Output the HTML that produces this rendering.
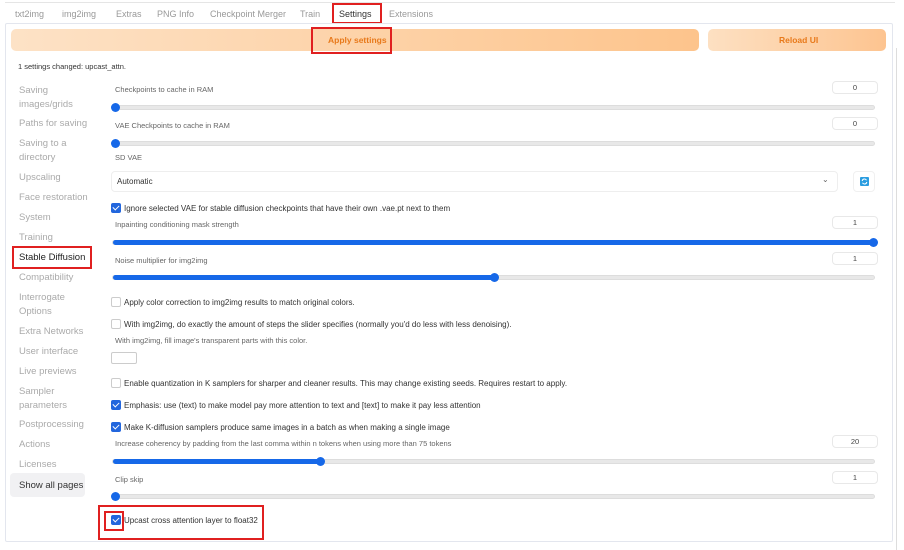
<!DOCTYPE html>
<html><head><meta charset="utf-8"><style>
*{box-sizing:border-box;margin:0;padding:0}
body{width:904px;height:550px;background:#fff;font-family:"Liberation Sans",sans-serif;position:relative;overflow:hidden;color:#444}
.a{position:absolute;white-space:nowrap}
.tab{font-size:9px;color:#999;top:9px}
.side{font-size:9.5px;color:#aaa;left:19px;line-height:14px}
.lbl{font-size:7.5px;color:#666;left:115px}
.cb{font-size:8px;color:#333;left:124px}
.num{position:absolute;left:832px;width:46px;height:13px;border:1px solid #e8e8e8;border-radius:4px;font-size:7.5px;text-align:center;line-height:11px;color:#444}
.track{position:absolute;left:112px;width:763px;height:5px;background:#e8e8e8;border-radius:3px;border:1px solid #ddd}
.fill{position:absolute;left:0;top:-1px;height:5px;background:#1668e8;border-radius:3px}
.thumb{position:absolute;width:9px;height:9px;border-radius:50%;background:#1668e8;top:-3px}
.box{position:absolute;left:111px;width:10px;height:10px;border-radius:2px}
.on{background:#2266dd}
.on:after{content:"";position:absolute;left:3px;top:1px;width:3px;height:5px;border:solid #fff;border-width:0 1.5px 1.5px 0;transform:rotate(45deg)}
.off{border:1px solid #ccc;background:#fff}
.red{position:absolute;border:2px solid #e02020}
</style></head><body>
<div class="a" style="left:5px;top:2px;width:890px;height:1px;background:#e5e5e5"></div>
<div class="a tab" style="left:15px">txt2img</div>
<div class="a tab" style="left:62px">img2img</div>
<div class="a tab" style="left:116px">Extras</div>
<div class="a tab" style="left:157px">PNG Info</div>
<div class="a tab" style="left:210px">Checkpoint Merger</div>
<div class="a tab" style="left:300px">Train</div>
<div class="a tab" style="left:339px;color:#333">Settings</div>
<div class="a tab" style="left:389px">Extensions</div>
<div class="red" style="left:332px;top:3px;width:50px;height:21px"></div>
<div class="a" style="left:5px;top:23px;width:888px;height:519px;border:1px solid #e3e6ee;border-radius:2px"></div>
<div class="a" style="left:896px;top:48px;width:1px;height:502px;background:#ddd"></div>
<div class="a" style="left:11px;top:29px;width:688px;height:22px;border-radius:5px;background:linear-gradient(90deg,#fde2c6,#fdc48c)"></div>
<div class="a" style="left:328px;top:35px;font-size:8.5px;font-weight:bold;color:#e8791a">Apply settings</div>
<div class="red" style="left:311px;top:27px;width:81px;height:27px"></div>
<div class="a" style="left:708px;top:29px;width:178px;height:22px;border-radius:5px;background:linear-gradient(90deg,#fde0c2,#fdc490)"></div>
<div class="a" style="left:779px;top:35px;font-size:8.5px;font-weight:bold;color:#e8791a">Reload UI</div>
<div class="a" style="left:18px;top:62px;font-size:7.5px;color:#333">1 settings changed: upcast_attn.</div>

<div class="a side" style="top:84px">Saving<br>images/grids</div>
<div class="a side" style="top:117px">Paths for saving</div>
<div class="a side" style="top:137px">Saving to a<br>directory</div>
<div class="a side" style="top:171px">Upscaling</div>
<div class="a side" style="top:191px">Face restoration</div>
<div class="a side" style="top:211px">System</div>
<div class="a side" style="top:231px">Training</div>
<div class="a side" style="top:251px;color:#222">Stable Diffusion</div>
<div class="red" style="left:12px;top:246px;width:80px;height:23px"></div>
<div class="a side" style="top:271px">Compatibility</div>
<div class="a side" style="top:291px">Interrogate<br>Options</div>
<div class="a side" style="top:325px">Extra Networks</div>
<div class="a side" style="top:345px">User interface</div>
<div class="a side" style="top:365px">Live previews</div>
<div class="a side" style="top:385px">Sampler<br>parameters</div>
<div class="a side" style="top:418px">Postprocessing</div>
<div class="a side" style="top:438px">Actions</div>
<div class="a side" style="top:458px">Licenses</div>
<div class="a" style="left:10px;top:473px;width:75px;height:24px;background:#f1f1f3;border-radius:4px"></div>
<div class="a side" style="top:479px;color:#333">Show all pages</div>

<div class="a lbl" style="top:85px">Checkpoints to cache in RAM</div>
<div class="num" style="top:81px">0</div>
<div class="track" style="top:105px"><div class="thumb" style="left:-2px"></div></div>
<div class="a lbl" style="top:121px">VAE Checkpoints to cache in RAM</div>
<div class="num" style="top:117px">0</div>
<div class="track" style="top:141px"><div class="thumb" style="left:-2px"></div></div>
<div class="a lbl" style="top:153px">SD VAE</div>
<div class="a" style="left:111px;top:171px;width:727px;height:21px;border:1px solid #eee;border-radius:4px"></div>
<div class="a" style="left:117px;top:177px;font-size:8px;color:#333">Automatic</div>
<div class="a" style="left:822px;top:175px;font-size:8px;color:#666">⌄</div>
<div class="a" style="left:853px;top:171px;width:22px;height:21px;border:1px solid #f0f0f0;border-radius:4px"></div>
<div class="a" style="left:860px;top:177px;width:9px;height:9px;background:#2b9de0;border-radius:1px"></div>
<svg class="a" style="left:860px;top:177px" width="9" height="9" viewBox="0 0 9 9"><path d="M2.2 4 A2.3 2.3 0 0 1 6.5 3.2 M6.8 5 A2.3 2.3 0 0 1 2.5 5.8" stroke="#fff" stroke-width="1" fill="none"/></svg>
<div class="box on" style="top:203px"></div>
<div class="a cb" style="top:204px">Ignore selected VAE for stable diffusion checkpoints that have their own .vae.pt next to them</div>
<div class="a lbl" style="top:220px">Inpainting conditioning mask strength</div>
<div class="num" style="top:216px">1</div>
<div class="track" style="top:240px"><div class="fill" style="width:763px"></div><div class="thumb" style="left:756px"></div></div>
<div class="a lbl" style="top:256px">Noise multiplier for img2img</div>
<div class="num" style="top:252px">1</div>
<div class="track" style="top:275px"><div class="fill" style="width:382px"></div><div class="thumb" style="left:377px"></div></div>
<div class="box off" style="top:297px"></div>
<div class="a cb" style="top:298px">Apply color correction to img2img results to match original colors.</div>
<div class="box off" style="top:319px"></div>
<div class="a cb" style="top:320px">With img2img, do exactly the amount of steps the slider specifies (normally you'd do less with less denoising).</div>
<div class="a lbl" style="top:336px">With img2img, fill image's transparent parts with this color.</div>
<div class="a" style="left:111px;top:352px;width:26px;height:12px;border:1px solid #ccc;border-radius:2px"></div>
<div class="box off" style="top:378px"></div>
<div class="a cb" style="top:379px">Enable quantization in K samplers for sharper and cleaner results. This may change existing seeds. Requires restart to apply.</div>
<div class="box on" style="top:400px"></div>
<div class="a cb" style="top:401px">Emphasis: use (text) to make model pay more attention to text and [text] to make it pay less attention</div>
<div class="box on" style="top:422px"></div>
<div class="a cb" style="top:423px">Make K-diffusion samplers produce same images in a batch as when making a single image</div>
<div class="a lbl" style="top:439px">Increase coherency by padding from the last comma within n tokens when using more than 75 tokens</div>
<div class="num" style="top:435px">20</div>
<div class="track" style="top:459px"><div class="fill" style="width:208px"></div><div class="thumb" style="left:203px"></div></div>
<div class="a lbl" style="top:475px">Clip skip</div>
<div class="num" style="top:471px">1</div>
<div class="track" style="top:494px"><div class="thumb" style="left:-2px"></div></div>
<div class="box on" style="top:515px"></div>
<div class="a cb" style="top:516px">Upcast cross attention layer to float32</div>
<div class="red" style="left:98px;top:505px;width:166px;height:35px"></div>
<div class="red" style="left:104px;top:511px;width:20px;height:20px"></div>
</body></html>
